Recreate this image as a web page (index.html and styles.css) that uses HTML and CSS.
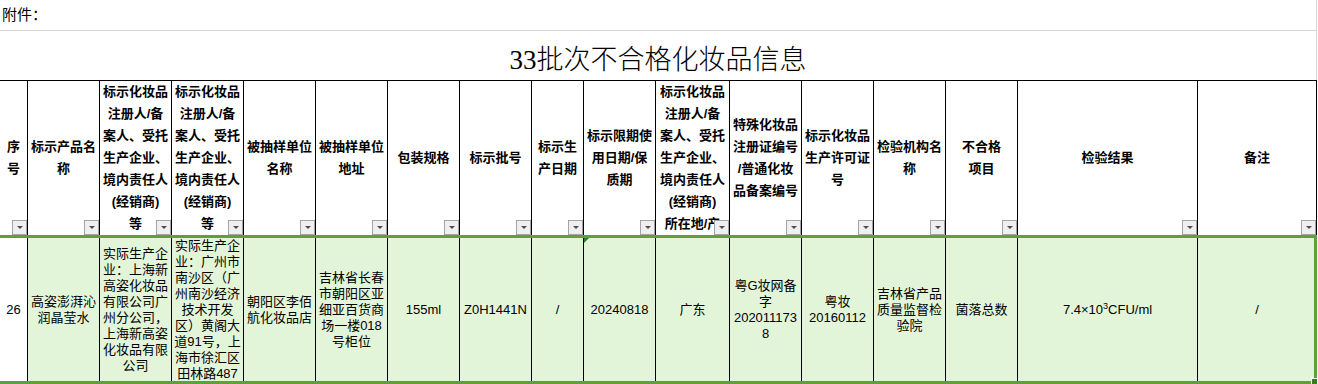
FILE: index.html
```html
<!DOCTYPE html>
<html lang="zh-CN">
<head>
<meta charset="utf-8">
<title>33批次不合格化妆品信息</title>
<link rel="stylesheet" href="styles.css">
</head>
<body>
<div class="sheet">
  <div class="top">
    <div class="attach">附件：</div>
    <div class="title">33批次不合格化妆品信息</div>
  </div>
  <div class="tbl">
    <div class="hc"><span>序<br>号</span><i class="dd"></i></div>
    <div class="hc"><span>标示产品名<br>称</span><i class="dd"></i></div>
    <div class="hc"><span>标示化妆品<br>注册人/备<br>案人、受托<br>生产企业、<br>境内责任人<br>(经销商)<br>等</span><i class="dd"></i></div>
    <div class="hc"><span>标示化妆品<br>注册人/备<br>案人、受托<br>生产企业、<br>境内责任人<br>(经销商)<br>等</span><i class="dd"></i></div>
    <div class="hc"><span>被抽样单位<br>名称</span><i class="dd"></i></div>
    <div class="hc"><span>被抽样单位<br>地址</span><i class="dd"></i></div>
    <div class="hc"><span>包装规格</span><i class="dd"></i></div>
    <div class="hc"><span>标示批号</span><i class="dd"></i></div>
    <div class="hc"><span>标示生<br>产日期</span><i class="dd"></i></div>
    <div class="hc"><span>标示限期使<br>用日期/保<br>质期</span><i class="dd"></i></div>
    <div class="hc"><span>标示化妆品<br>注册人/备<br>案人、受托<br>生产企业、<br>境内责任人<br>(经销商)<br>所在地/产<br>地</span><i class="dd"></i></div>
    <div class="hc"><span>特殊化妆品<br>注册证编号<br>/普通化妆<br>品备案编号</span><i class="dd"></i></div>
    <div class="hc"><span>标示化妆品<br>生产许可证<br>号</span><i class="dd"></i></div>
    <div class="hc"><span>检验机构名<br>称</span><i class="dd"></i></div>
    <div class="hc"><span>不合格<br>项目</span><i class="dd"></i></div>
    <div class="hc"><span>检验结果</span><i class="dd"></i></div>
    <div class="hc"><span>备注</span><i class="dd"></i></div>

    <div class="dc active"><span>26</span></div>
    <div class="dc"><span>高姿澎湃沁<br>润晶莹水</span></div>
    <div class="dc"><span>实际生产企<br>业：上海新<br>高姿化妆品<br>有限公司广<br>州分公司，<br>上海新高姿<br>化妆品有限<br>公司</span></div>
    <div class="dc"><span>实际生产企<br>业：广州市<br>南沙区（广<br>州南沙经济<br>技术开发<br>区）黄阁大<br>道91号，上<br>海市徐汇区<br>田林路487<br>号</span></div>
    <div class="dc"><span>朝阳区李佰<br>航化妆品店</span></div>
    <div class="dc"><span>吉林省长春<br>市朝阳区亚<br>细亚百货商<br>场一楼018<br>号柜位</span></div>
    <div class="dc"><span>155ml</span></div>
    <div class="dc"><span>Z0H1441N</span></div>
    <div class="dc"><span>/</span></div>
    <div class="dc err"><span>20240818</span></div>
    <div class="dc"><span>广东</span></div>
    <div class="dc"><span>粤G妆网备<br>字<br>202011173<br>8</span></div>
    <div class="dc"><span>粤妆<br>20160112</span></div>
    <div class="dc"><span>吉林省产品<br>质量监督检<br>验院</span></div>
    <div class="dc"><span>菌落总数</span></div>
    <div class="dc"><span>7.4×10<sup class="sup">3</sup>CFU/ml</span></div>
    <div class="dc"><span>/</span></div>

    <div class="sel"></div>
  </div>
</div>
</body>
</html>
```
FILE: styles.css
```css
html, body {
  margin: 0;
  padding: 0;
  background: #fff;
}

.sheet {
  width: 1318px;
  height: 384px;
  overflow: hidden;
  font-family: "Liberation Sans", "Noto Sans CJK SC", sans-serif;
  color: #000;
}

.top {
  width: 1317px;
  box-sizing: border-box;
  border-right: 1px solid #d4d4d4;
}

.attach {
  height: 31px;
  box-sizing: border-box;
  border-bottom: 1px solid #d4d4d4;
  padding-left: 2px;
  font-size: 15px;
  line-height: 30px;
}

.title {
  height: 49px;
  box-sizing: border-box;
  padding-top: 3px;
  display: flex;
  align-items: center;
  justify-content: center;
  font-family: "Liberation Serif", "Noto Sans CJK SC", serif;
  font-weight: 300;
  font-size: 27px;
}

.tbl {
  position: relative;
  width: 1317px;
  display: grid;
  grid-template-columns: 28px repeat(7, 72px) 52px 72px 74px repeat(4, 72px) 180px 119px;
  grid-template-rows: 154px 149px;
  border-top: 1px solid #000;
}

.hc {
  position: relative;
  border-right: 1px solid #000;
  display: flex;
  flex-direction: column;
  justify-content: safe center;
  align-items: center;
  text-align: center;
  font-weight: 700;
  font-size: 13px;
  line-height: 22px;
  white-space: nowrap;
  overflow: hidden;
}

.dd {
  position: absolute;
  right: 0;
  bottom: 0;
  width: 15px;
  height: 15px;
  box-sizing: border-box;
  border: 1px solid #a2a5ab;
  background: #efefef;
}

.dd::after {
  content: "";
  position: absolute;
  left: 4px;
  top: 5px;
  border-left: 3px solid transparent;
  border-right: 3px solid transparent;
  border-top: 3px solid #4d4d4d;
}

.dc {
  position: relative;
  border-right: 1px solid #000;
  background: #e3f5d8;
  box-sizing: border-box;
  padding: 3px 0;
  display: flex;
  flex-direction: column;
  justify-content: safe center;
  align-items: center;
  text-align: center;
  font-size: 13px;
  line-height: 16px;
  white-space: nowrap;
  overflow: hidden;
}

.dc.active {
  background: #fff;
}

.dc.err::before {
  content: "";
  position: absolute;
  top: 3px;
  left: 0;
  border-top: 5px solid #1f8a1f;
  border-right: 5px solid transparent;
}

.sup {
  font-size: 9px;
  line-height: 0;
  vertical-align: 5px;
}

.sel {
  position: absolute;
  top: 154px;
  left: -3px;
  right: 0;
  height: 149px;
  box-sizing: border-box;
  border: 3px solid #60a03a;
  z-index: 2;
}

.sel::after {
  content: "";
  position: absolute;
  right: -4px;
  bottom: -4px;
  width: 5px;
  height: 5px;
  background: #3b7a28;
  border: 1px solid #fff;
}
```
